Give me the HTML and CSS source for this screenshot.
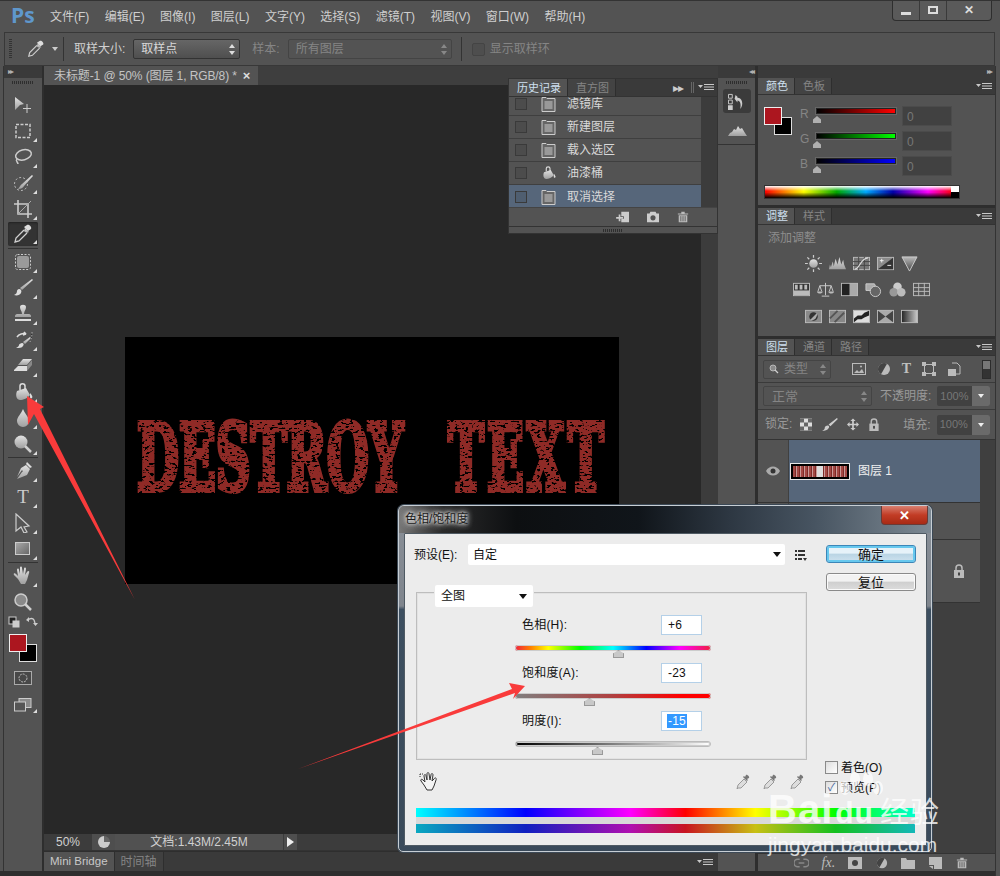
FILE: index.html
```html
<!DOCTYPE html>
<html lang="zh">
<head>
<meta charset="utf-8">
<title>Photoshop 色相/饱和度</title>
<link rel="stylesheet" href="styles.css">
</head>
<body>
<svg class="sprite" aria-hidden="true">
  <defs>
    <linearGradient id="g" x1="0" y1="0" x2="0" y2="1"><stop offset="0" stop-color="#e2e2e2"/><stop offset="1" stop-color="#a0a0a0"/></linearGradient>
    <filter id="distress" x="0" y="0" width="100%" height="100%">
      <feTurbulence type="fractalNoise" baseFrequency="0.11 0.45" numOctaves="3" seed="7" result="n"/>
      <feColorMatrix in="n" type="matrix" values="0 0 0 0 0  0 0 0 0 0  0 0 0 0 0  0 0 0 -14 9.2" result="m"/>
      <feComposite in="SourceGraphic" in2="m" operator="in"/>
    </filter>
  </defs>
  <symbol id="move" viewBox="0 0 20 20"><path fill="url(#g)" d="M2 2l9 7-4 1-5 5z"/><path fill="none" stroke="#ccc" d="M14 9v9M10 13.500h8"/></symbol>
  <symbol id="marquee" viewBox="0 0 20 20"><rect x="3" y="3.500" width="14" height="13" fill="none" stroke="#ccc" stroke-width="1.500" stroke-dasharray="3 1.500"/></symbol>
  <symbol id="lasso" viewBox="0 0 20 20"><ellipse cx="10.500" cy="8" rx="8" ry="5" fill="none" stroke="#ccc" stroke-width="1.500" transform="rotate(-15 10 8)"/><path fill="none" stroke="#ccc" stroke-width="1.500" d="M4 12c-2 2 1 3 1 5"/></symbol>
  <symbol id="quick" viewBox="0 0 20 20"><circle cx="8" cy="11" r="6.500" fill="none" stroke="#bbb" stroke-dasharray="2 2"/><path fill="url(#g)" d="M19 2l1 1-9 10c-1 2-3 3-6 3 2-2 2-4 4-5z"/></symbol>
  <symbol id="crop" viewBox="0 0 20 20"><path fill="none" stroke="#ccc" stroke-width="1.600" d="M5 1v14h14M1 5h14v14"/><path stroke="#aaa" d="M5 15L18 2"/></symbol>
  <symbol id="drop" viewBox="0 0 20 20"><path fill="url(#g)" d="M12 4l4 4-2 1-2-1-1-1z"/><path fill="#ddd" d="M14 1c2-1 5 2 4 4l-3 2-4-4z"/><path fill="none" stroke="#d0d0d0" stroke-width="1.300" d="M11 6L3 14l-1 4 4-1 8-8"/></symbol>
  <symbol id="heal" viewBox="0 0 20 20"><rect x="4" y="4" width="12" height="12" rx="2" fill="#9a9a9a"/><rect x="2.500" y="2.500" width="15" height="15" rx="2" fill="none" stroke="#ccc" stroke-dasharray="2 1.500"/></symbol>
  <symbol id="brush" viewBox="0 0 20 20"><path fill="url(#g)" d="M19 1l1 1L9 12l-2-2z"/><path fill="#ddd" d="M6 11c2 0 3 2 2 4-1 2-4 3-7 2 2-1 3-2 3-4 0-1 1-2 2-2z"/></symbol>
  <symbol id="stamp" viewBox="0 0 20 20"><path fill="url(#g)" d="M7 3c0-3 6-3 6 0 0 3-2 4-2 7h5c1 0 2 1 2 2v1H2v-1c0-1 1-2 2-2h5c0-3-2-4-2-7z"/><path fill="#ddd" d="M2 15h16v2H2z"/></symbol>
  <symbol id="hbrush" viewBox="0 0 20 20"><path fill="url(#g)" d="M17 7l1 1-6 6-2-2z"/><path fill="#ddd" d="M9 13c2 0 2 2 1 3-1 2-4 2-7 2 2-1 3-2 3-3 0-1 2-2 3-2z"/><path fill="none" stroke="#ddd" stroke-width="1.500" d="M4 7c2-3 6-4 9-3l-2-2M13 4l-3 1"/><path stroke="#aaa" stroke-dasharray="1.500 1.500" d="M19 2c0 5-1 7-2 10"/></symbol>
  <symbol id="eraser" viewBox="0 0 20 20"><path fill="url(#g)" d="M10 3h9l-5 6H5z"/><path fill="#ddd" d="M5 10h9v5H1v-1z"/><path fill="#888" d="M14 10l5-6v5l-5 6z"/></symbol>
  <symbol id="bucket" viewBox="0 0 20 20"><path fill="none" stroke="#ddd" stroke-width="1.500" d="M7 8V4c0-3 5-3 5 0v4"/><path fill="url(#g)" d="M4 9l9-3 4 7c-2 3-7 5-10 5C4 18 2 14 4 9z"/><path fill="#ddd" d="M17 11c2 2 3 4 2 5-1 1-2 0-2-1z"/></symbol>
  <symbol id="blur" viewBox="0 0 20 20"><path fill="url(#g)" d="M10 1c2 5 6 8 6 12a6 6 0 0 1-12 0c0-4 4-7 6-12z"/></symbol>
  <symbol id="dodge" viewBox="0 0 20 20"><circle cx="8" cy="8" r="6.500" fill="url(#g)"/><path stroke="#d0d0d0" stroke-width="2.500" d="M12 12l6 6"/></symbol>
  <symbol id="pen" viewBox="0 0 20 20"><path fill="url(#g)" d="M13 4l4 4-3 6-10 4 5-7c1 0 1-1 0-2L4 16l4-9z"/><path fill="#ddd" d="M14 1l5 5-2 1-4-4z"/></symbol>
  <symbol id="pointer" viewBox="0 0 20 20"><path fill="#555" stroke="#ccc" stroke-width="1.200" d="M3 1l13 12-5 1 3 5-3 1-3-6-5 4z"/></symbol>
  <symbol id="shape" viewBox="0 0 20 20"><defs><linearGradient id="s" x1="0" y1="0" x2="1" y2="1"><stop offset="0" stop-color="#aaa"/><stop offset="1" stop-color="#666"/></linearGradient></defs><rect x="2.500" y="3.500" width="14" height="12" fill="url(#s)" stroke="#ccc"/></symbol>
  <symbol id="hand" viewBox="0 0 20 20"><path fill="url(#g)" d="M5 13L1 9c-1-2 1-2 2-1l2 2-1-6c0-2 2-2 2 0l1 4V2c0-2 2-2 2 0l1 6 1-5c0-2 2-2 2 0l-1 6 2-3c1-2 3-1 2 1l-2 7-2 4H8z"/></symbol>
  <symbol id="zoom" viewBox="0 0 20 20"><circle cx="8" cy="8" r="6" fill="#8a8a8a" stroke="#ccc" stroke-width="1.500"/><path stroke="#d0d0d0" stroke-width="2.500" d="M12 12l6 6"/></symbol>
  <symbol id="defcol" viewBox="0 0 12 12"><rect x="1" y="1" width="7" height="7" fill="#222" stroke="#ccc"/><rect x="5" y="5" width="6" height="6" fill="#ccc" stroke="#ccc"/></symbol>
  <symbol id="swap" viewBox="0 0 12 12"><path fill="none" stroke="#ccc" stroke-width="1.300" d="M2 4c2-2 5-2 6 0l1 3"/><path fill="#ccc" d="M0 4l3-3v5zM7 7h5l-2.500 3z"/></symbol>
  <symbol id="qmask" viewBox="0 0 18 14"><rect x=".5" y=".5" width="17" height="13" fill="#484848" stroke="#aaa"/><circle cx="9" cy="7" r="4" fill="none" stroke="#bbb" stroke-dasharray="2 1"/></symbol>
  <symbol id="screen" viewBox="0 0 18 14"><rect x="5" y=".5" width="12" height="9" fill="#8a8a8a" stroke="#ccc"/><rect x=".5" y="4" width="11" height="9" fill="#555" stroke="#ccc"/></symbol>
  <symbol id="updn" viewBox="0 0 6 11"><path fill="currentColor" d="M3 0l3 4H0zM0 7h6l-3 4z"/></symbol>
  <symbol id="menu" viewBox="0 0 16 8"><path fill="#c8c8c8" d="M6 1h10v1H6zM6 3.500h10v1H6zM6 6h10v1H6zM0 2h5L2.500 5z"/></symbol>
  <symbol id="doc" viewBox="0 0 14 16"><path fill="#666" stroke="#ccc" d="M.5 1.500h4l1 1h8v13H.5z"/><path stroke="#ccc" d="M3 6h8M3 8h8M3 10h8M3 12h8"/></symbol>
  <symbol id="newsnap" viewBox="0 0 16 14"><path fill="#ccc" d="M6 1h9v12H6V9h3V6H6z"/><path fill="#ccc" d="M0 7h3V4h2v3h3v2H5v3H3V9H0z"/></symbol>
  <symbol id="camera" viewBox="0 0 16 14"><path fill="#ccc" d="M1 3h3l1-2h6l1 2h3v10H1z"/><circle cx="8" cy="8" r="3" fill="#535353"/></symbol>
  <symbol id="trash" viewBox="0 0 14 14"><path fill="#bbb" d="M1 3h12v1H1zM5 1h4v2H5zM2 5h10v8H2z"/><path stroke="#535353" d="M4.500 6v6M7 6v6M9.500 6v6"/></symbol>
  <symbol id="histo" viewBox="0 0 20 12"><path fill="url(#g)" d="M1 11l2-3 2-1 2-3 2 1 2-4 2 3 2-1 3 5 2 3z"/></symbol>
  <symbol id="histpanel" viewBox="0 0 18 18"><path fill="none" stroke="#ccc" d="M.5 1.500h4v4h-4zM.5 7.500h4v4h-4z"/><path fill="#ccc" d="M0 13h5v5H0zM8 2l2 2V5c5 0 7 7 3 12 1-5 0-9-3-9v2L7 6z"/></symbol>
  <symbol id="sun" viewBox="0 0 18 18"><circle cx="9" cy="9" r="4.500" fill="url(#g)"/><path stroke="#ccc" stroke-width="1.300" d="M9 0v3M9 15v3M0 9h3M15 9h3M2.500 2.500l2 2M13.500 13.500l2 2M2.500 15.500l2-2M13.500 4.500l2-2"/></symbol>
  <symbol id="levels" viewBox="0 0 18 18"><path fill="url(#g)" d="M0 15l1-5 1 3 2-6 1 5 2-8 2 6 2-8 2 8 2-5 1 5 2 5z"/></symbol>
  <symbol id="curves" viewBox="0 0 18 18"><rect x=".5" y="2.500" width="17" height="13" fill="#777" stroke="#bbb"/><path stroke="#444" d="M0 7h18M0 11h18M6 2v14M12 2v14"/><path fill="none" stroke="#ddd" stroke-width="1.300" d="M2 15c5 0 6-12 14-12"/></symbol>
  <symbol id="expo" viewBox="0 0 18 18"><rect x=".5" y="2.500" width="17" height="13" fill="#8a8a8a" stroke="#bbb"/><path fill="#333" d="M17 3v12H1z"/><path stroke="#eee" d="M3 6h4M5 4v4M11 11h4"/></symbol>
  <symbol id="vib" viewBox="0 0 18 18"><defs><linearGradient id="v" x1="0" y1="0" x2="0" y2="1"><stop offset="0" stop-color="#bbb"/><stop offset="1" stop-color="#444"/></linearGradient></defs><path fill="url(#v)" stroke="#ccc" d="M1 2h16L9 17z"/></symbol>
  <symbol id="hsl" viewBox="0 0 18 18"><rect x=".5" y="2.500" width="17" height="13" fill="#333" stroke="#bbb"/><path fill="#bbb" d="M2 4h3v5H2zM7 4h3v5H7zM12 4h3v5h-3z"/><rect x="1" y="10" width="16" height="5" fill="#bbb"/></symbol>
  <symbol id="balance" viewBox="0 0 18 18"><path fill="none" stroke="#ccc" d="M3 5h12M9 2v13M5 16h8M3 5L1 11M3 5l2 6M15 5l-2 6M15 5l2 6"/><path fill="#bbb" d="M0 11h6c0 3-6 3-6 0zM12 11h6c0 3-6 3-6 0z"/></symbol>
  <symbol id="bw" viewBox="0 0 18 18"><rect x=".5" y="2.500" width="17" height="13" fill="#aaa" stroke="#bbb"/><rect x="1" y="3" width="8" height="12" fill="#222"/></symbol>
  <symbol id="photo" viewBox="0 0 18 18"><path fill="#aaa" stroke="#ccc" d="M1 3h9l1 2v5H1z"/><circle cx="11" cy="11" r="5.500" fill="#666" stroke="#ccc"/></symbol>
  <symbol id="mixer" viewBox="0 0 18 18"><circle cx="9" cy="6" r="4.500" fill="#ccc"/><circle cx="5" cy="12" r="4.500" fill="#999"/><circle cx="13" cy="12" r="4.500" fill="#bbb"/></symbol>
  <symbol id="lookup" viewBox="0 0 18 18"><rect x=".5" y="2.500" width="17" height="13" fill="#555" stroke="#bbb"/><path stroke="#bbb" d="M6 2v14M12 2v14M0 7h18M0 11h18"/></symbol>
  <symbol id="invert" viewBox="0 0 18 18"><rect x=".5" y="2.500" width="17" height="13" fill="#8a8a8a" stroke="#bbb"/><circle cx="9" cy="9" r="4.500" fill="#333"/><path fill="#aaa" d="M13 5L5 13c5 1 8-3 8-8z"/></symbol>
  <symbol id="poster" viewBox="0 0 18 18"><rect x=".5" y="2.500" width="17" height="13" fill="#888" stroke="#bbb"/><path stroke="#555" stroke-width="2" d="M1 11l8-8M6 15l10-10"/></symbol>
  <symbol id="thresh" viewBox="0 0 18 18"><rect x=".5" y="2.500" width="17" height="13" fill="#ddd" stroke="#bbb"/><path fill="#222" d="M1 11l4-3h4l3-3 5-2v5l-5 2-3 2H5l-4 3z"/></symbol>
  <symbol id="selcol" viewBox="0 0 18 18"><rect x=".5" y="2.500" width="17" height="13" fill="#aaa" stroke="#bbb"/><path fill="#444" d="M1 3l8 6-8 6zM17 3L9 9l8 6z"/></symbol>
  <symbol id="gmap" viewBox="0 0 18 18"><defs><linearGradient id="m"><stop offset="0" stop-color="#222"/><stop offset="1" stop-color="#ccc"/></linearGradient></defs><rect x=".5" y="2.500" width="17" height="13" fill="url(#m)" stroke="#bbb"/></symbol>
  <symbol id="fimg" viewBox="0 0 14 14"><rect x=".5" y="1.500" width="13" height="11" fill="#555" stroke="#bbb"/><path fill="#bbb" d="M2 11l3-3 2 2 3-3 2 4z"/><circle cx="9" cy="4.500" r="1" fill="#bbb"/></symbol>
  <symbol id="fadj" viewBox="0 0 14 14"><circle cx="7" cy="7" r="6" fill="#bbb"/><path fill="#444" d="M7 1a6 6 0 0 0 0 12z" transform="rotate(30 7 7)"/></symbol>
  <symbol id="fshape" viewBox="0 0 14 14"><path fill="none" stroke="#bbb" d="M2.500 2.500h9v9h-9z"/><path fill="#bbb" d="M0 0h4v4H0zM10 0h4v4h-4zM0 10h4v4H0zM10 10h4v4h-4z"/></symbol>
  <symbol id="fsmart" viewBox="0 0 14 14"><path fill="none" stroke="#bbb" d="M5 1h5l3 3v8H9"/><rect x="1" y="7" width="8" height="7" fill="#bbb"/></symbol>
  <symbol id="lockpx" viewBox="0 0 12 12"><path fill="#ddd" d="M0 0h12v12H0z"/><path fill="#666" d="M0 0h4v4H0zM8 0h4v4H8zM4 4h4v4H4zM0 8h4v4H0zM8 8h4v4H8z"/></symbol>
  <symbol id="lockbr" viewBox="0 0 18 14"><path fill="#ccc" d="M17 0l1 1-8 8-2-2zM7 8c2 0 2 2 1 3-1 2-4 3-7 3 2-1 3-2 3-4 0-1 2-2 3-2z"/></symbol>
  <symbol id="lockmv" viewBox="0 0 14 14"><path fill="#ccc" d="M7 0l3 3H8v3h3V4l3 3-3 3V8H8v3h2l-3 3-3-3h2V8H3v2L0 7l3-3v2h3V3H4z"/></symbol>
  <symbol id="lock" viewBox="0 0 12 14"><path fill="none" stroke="#bbb" stroke-width="1.500" d="M3 7V4c0-4 6-4 6 0v3"/><path fill="#bbb" d="M1 6h10v8H1z"/><rect x="5" y="8.500" width="2" height="3" fill="#444"/></symbol>
  <symbol id="eye" viewBox="0 0 14 10"><path fill="#aaa" d="M0 5c3-6 11-6 14 0-3 6-11 6-14 0z"/><circle cx="7" cy="5" r="2.500" fill="#333"/></symbol>
  <symbol id="link" viewBox="0 0 16 10"><path fill="none" stroke="#888" stroke-width="1.500" d="M6 1H4a4 4 0 0 0 0 8h2M10 1h2a4 4 0 0 1 0 8h-2M5 5h6"/></symbol>
  <symbol id="mask" viewBox="0 0 14 12"><rect width="14" height="12" fill="#bbb"/><circle cx="7" cy="6" r="3" fill="#444"/></symbol>
  <symbol id="folder" viewBox="0 0 14 12"><path fill="#bbb" d="M0 1h5l1 2h8v9H0z"/></symbol>
  <symbol id="newl" viewBox="0 0 14 12"><path fill="#bbb" d="M1 0h13v12H6V8H1z"/><path fill="#bbb" d="M1 9h4v3z"/></symbol>
  <symbol id="dlgdrop" viewBox="0 0 16 16"><path fill="#ddd" stroke="#999" d="M2 14l-1 1 1-4 6-6 3 3-6 6z"/><path fill="#777" d="M9 3l1-2c1-1 4 2 3 3l-2 1 1 1-1 1-4-4 1-1z"/></symbol>
  <symbol id="dhand" viewBox="0 0 20 20"><path fill="#f4f4f4" stroke="#333" d="M5 13L2 9c-1-2 1-2 2-1l2 2-1-6c0-2 2-2 2 0l1 4V2c0-2 2-2 2 0l1 6 1-5c0-2 2-2 2 0l-1 6 2-2c1-2 3-1 2 1l-2 6-2 4H8z"/><path stroke="#333" stroke-dasharray="1 1" d="M1 2h3M1 2v3"/></symbol>
  <symbol id="dlist" viewBox="0 0 12 12"><path fill="#333" d="M0 1h2v2H0zM3 1h7v2H3zM0 5h2v2H0zM3 5h7v2H3zM0 9h2v2H0zM3 9h4v2H3zM8 9h4l-2 3z"/></symbol>
  <symbol id="paw" viewBox="0 0 44 30"><ellipse cx="6" cy="16" rx="5" ry="7"/><ellipse cx="16" cy="7" rx="5" ry="7"/><ellipse cx="29" cy="7" rx="5" ry="7"/><ellipse cx="39" cy="16" rx="5" ry="7"/></symbol>
</svg>

<div class="app">
  <header class="titlebar">
    <div class="logo">Ps</div>
    <nav class="menu">
      <span>文件(F)</span><span>编辑(E)</span><span>图像(I)</span><span>图层(L)</span><span>文字(Y)</span><span>选择(S)</span><span>滤镜(T)</span><span>视图(V)</span><span>窗口(W)</span><span>帮助(H)</span>
    </nav>
    <div class="winbtns">
      <div class="winbtn wmin"><i class="w-min"></i></div>
      <div class="winbtn wmax"><i class="w-max"></i></div>
      <div class="winbtn wclose">✕</div>
    </div>
  </header>

  <div class="options">
    <div class="grip-v"></div>
    <svg class="opt-tool"><use href="#drop"/></svg>
    <i class="caret"></i>
    <i class="opt-sep"></i>
    <span class="opt-label">取样大小:</span>
    <div class="sel sel-size"><span>取样点</span><svg class="updn"><use href="#updn"/></svg></div>
    <span class="opt-label gap dim">样本:</span>
    <div class="sel sel-sample dim"><span>所有图层</span><svg class="updn"><use href="#updn"/></svg></div>
    <i class="opt-sep sep2"></i>
    <i class="opt-check"></i>
    <span class="opt-label dim">显示取样环</span>
  </div>

  <div class="main">
    <div class="edge-left"></div>

    <aside class="toolcol">
      <div class="collapse-bar">▸▸</div>
      <div class="toolbar">
        <div class="grip-h"></div>
        <div class="tool"><svg><use href="#move"/></svg></div>
        <div class="tool more"><svg><use href="#marquee"/></svg></div>
        <div class="tool more"><svg><use href="#lasso"/></svg></div>
        <div class="tool more"><svg><use href="#quick"/></svg></div>
        <div class="tool more"><svg><use href="#crop"/></svg></div>
        <div class="tool more active"><svg><use href="#drop"/></svg></div>
        <div class="tool-sep"></div>
        <div class="tool more"><svg><use href="#heal"/></svg></div>
        <div class="tool more"><svg><use href="#brush"/></svg></div>
        <div class="tool more"><svg><use href="#stamp"/></svg></div>
        <div class="tool more"><svg><use href="#hbrush"/></svg></div>
        <div class="tool more"><svg><use href="#eraser"/></svg></div>
        <div class="tool more"><svg><use href="#bucket"/></svg></div>
        <div class="tool more"><svg><use href="#blur"/></svg></div>
        <div class="tool more"><svg><use href="#dodge"/></svg></div>
        <div class="tool-sep"></div>
        <div class="tool more"><svg><use href="#pen"/></svg></div>
        <div class="tool more tool-t">T</div>
        <div class="tool more"><svg><use href="#pointer"/></svg></div>
        <div class="tool more"><svg><use href="#shape"/></svg></div>
        <div class="tool-sep"></div>
        <div class="tool more"><svg><use href="#hand"/></svg></div>
        <div class="tool"><svg><use href="#zoom"/></svg></div>
        <div class="swaprow"><svg><use href="#defcol"/></svg><svg><use href="#swap"/></svg></div>
        <div class="swatches"><i class="sw-bg"></i><i class="sw-fg"></i></div>
        <svg class="qmask"><use href="#qmask"/></svg>
        <div class="screenmode more"><svg><use href="#screen"/></svg></div>
      </div>
    </aside>

    <section class="doc">
      <div class="doctabs">
        <div class="doctab"><span>未标题-1 @ 50% (图层 1, RGB/8) *</span><b>×</b></div>
      </div>
      <div class="docbody">
        <div class="canvas-wrap">
          <div class="canvas"><div class="dtext">DESTROY <span class="dword2">TEXT</span></div></div>
        </div>
        <div class="docstrip"></div>
      </div>
      <div class="status">
        <span class="st-zoom">50%</span>
        <span class="st-icon"><i></i></span>
        <span class="st-doc">文档:1.43M/2.45M</span>
        <span class="st-arrow"><i></i></span>
      </div>
      <div class="bottomtabs">
        <span class="btab on">Mini Bridge</span>
        <span class="btab">时间轴</span>
        <svg class="menuicon"><use href="#menu"/></svg>
      </div>
    </section>

    <aside class="dockcol">
      <div class="collapse-bar center">◂◂</div>
      <div class="dock">
        <div class="grip-h"></div>
        <div class="dockbtn"><svg><use href="#histpanel"/></svg></div>
        <svg class="dockhist"><use href="#histo"/></svg>
      </div>
      <div class="dockrest"></div>
    </aside>

    <aside class="panels">
      <div class="collapse-bar right">▸▸</div>

      <div class="panel p-color">
        <div class="tabs"><span class="tab on">颜色</span><span class="tab">色板</span><svg class="menuicon"><use href="#menu"/></svg></div>
        <div class="color-body">
          <div class="colorrow">
            <div class="swatches big"><i class="sw-bg"></i><i class="sw-fg"></i></div>
            <div class="csliders">
              <div class="cs"><span>R</span><div class="ctrack tr"><i></i></div><div class="cval">0</div></div>
              <div class="cs"><span>G</span><div class="ctrack tg"><i></i></div><div class="cval">0</div></div>
              <div class="cs"><span>B</span><div class="ctrack tb"><i></i></div><div class="cval">0</div></div>
            </div>
          </div>
          <div class="ramp"><i></i></div>
        </div>
      </div>

      <div class="panel p-adjust">
        <div class="tabs"><span class="tab on">调整</span><span class="tab">样式</span><svg class="menuicon"><use href="#menu"/></svg></div>
        <div class="adj-title">添加调整</div>
        <div class="adj-row"><svg><use href="#sun"/></svg><svg><use href="#levels"/></svg><svg><use href="#curves"/></svg><svg><use href="#expo"/></svg><svg><use href="#vib"/></svg></div>
        <div class="adj-row"><svg><use href="#hsl"/></svg><svg><use href="#balance"/></svg><svg><use href="#bw"/></svg><svg><use href="#photo"/></svg><svg><use href="#mixer"/></svg><svg><use href="#lookup"/></svg></div>
        <div class="adj-row"><svg><use href="#invert"/></svg><svg><use href="#poster"/></svg><svg><use href="#thresh"/></svg><svg><use href="#selcol"/></svg><svg><use href="#gmap"/></svg></div>
      </div>

      <div class="panel p-layers">
        <div class="tabs"><span class="tab on">图层</span><span class="tab">通道</span><span class="tab">路径</span><svg class="menuicon"><use href="#menu"/></svg></div>
        <div class="lrow lfilter">
          <div class="sel sel-filter dim"><svg class="mag"><use href="#zoom"/></svg><span>类型</span><svg class="updn"><use href="#updn"/></svg></div>
          <div class="ficons"><svg><use href="#fimg"/></svg><svg><use href="#fadj"/></svg><span class="ft">T</span><svg><use href="#fshape"/></svg><svg><use href="#fsmart"/></svg></div>
          <div class="ftoggle"><i></i></div>
        </div>
        <div class="lrow lblend">
          <div class="sel sel-blend dim"><span>正常</span><svg class="updn"><use href="#updn"/></svg></div>
          <span class="llabel">不透明度:</span>
          <div class="lnum"><span>100%</span><b><i class="caret"></i></b></div>
        </div>
        <div class="lrow llock">
          <span class="llabel">锁定:</span>
          <div class="licons"><svg><use href="#lockpx"/></svg><svg class="wide"><use href="#lockbr"/></svg><svg><use href="#lockmv"/></svg><svg><use href="#lock"/></svg></div>
          <span class="llabel fill">填充:</span>
          <div class="lnum"><span>100%</span><b><i class="caret"></i></b></div>
        </div>
        <div class="layers">
          <div class="layer sel-layer">
            <div class="eyecol"><svg><use href="#eye"/></svg></div>
            <div class="lbody"><div class="thumb"><i></i></div><span class="lname">图层 1</span></div>
          </div>
          <div class="layer short"><div class="eyecol"></div><div class="lbody"></div></div>
          <div class="layer bg"><div class="eyecol"></div><div class="lbody"><svg class="llock-ic"><use href="#lock"/></svg></div></div>
        </div>
        <div class="lfoot">
          <svg class="lnk"><use href="#link"/></svg>
          <span class="fx">fx.</span>
          <svg><use href="#mask"/></svg>
          <svg><use href="#fadj"/></svg>
          <svg><use href="#folder"/></svg>
          <svg><use href="#newl"/></svg>
          <svg><use href="#trash"/></svg>
        </div>
      </div>
    </aside>
    <div class="edge-right"></div>
  </div>

  <!-- floating history panel -->
  <div class="history">
    <div class="tabs"><span class="tab on wide">历史记录</span><span class="tab">直方图</span><span class="hist-ff">▸▸</span><i class="hist-bar"></i><svg class="menuicon"><use href="#menu"/></svg></div>
    <div class="hist-main">
      <div class="hist-list">
        <div class="hrow cut"><i class="hbox"></i><svg><use href="#doc"/></svg><span>滤镜库</span></div>
        <div class="hrow"><i class="hbox"></i><svg><use href="#doc"/></svg><span>新建图层</span></div>
        <div class="hrow"><i class="hbox"></i><svg><use href="#doc"/></svg><span>载入选区</span></div>
        <div class="hrow"><i class="hbox"></i><svg><use href="#bucket"/></svg><span>油漆桶</span></div>
        <div class="hrow on"><i class="hbox"></i><svg><use href="#doc"/></svg><span>取消选择</span></div>
      </div>
      <div class="hist-scroll"></div>
    </div>
    <div class="hist-foot"><svg class="nsnap"><use href="#newsnap"/></svg><svg><use href="#camera"/></svg><svg><use href="#trash"/></svg></div>
    <div class="hist-grip"><i></i></div>
  </div>

  <!-- modal dialog -->
  <div class="dialog">
    <div class="dlg-title"><span>色相/饱和度</span><div class="dlg-close">✕</div></div>
    <div class="dlg-body">
      <div class="dlg-main">
        <div class="dlg-left">
          <div class="preset">
            <span class="plabel">预设(E):</span>
            <div class="wsel"><span>自定</span><i class="tri"></i></div>
            <svg class="dlist"><use href="#dlist"/></svg>
          </div>
          <div class="group">
            <div class="legend"><span>全图</span><i class="tri"></i></div>
            <div class="hs">
              <div class="hs-row"><span>色相(H):</span><div class="num">+6</div></div>
              <div class="track t-hue"><i style="left:98px"></i></div>
              <div class="hs-row"><span>饱和度(A):</span><div class="num">-23</div></div>
              <div class="track t-sat"><i style="left:69px"></i></div>
              <div class="hs-row"><span>明度(I):</span><div class="num"><em>-15</em></div></div>
              <div class="track t-lum"><i style="left:76px"></i></div>
            </div>
          </div>
          <div class="pickers">
            <svg class="dhand"><use href="#dhand"/></svg>
            <div class="drops"><svg><use href="#dlgdrop"/></svg><svg><use href="#dlgdrop"/></svg><svg><use href="#dlgdrop"/></svg></div>
          </div>
        </div>
        <div class="dlg-right">
          <div class="wbtn primary">确定</div>
          <div class="wbtn">复位</div>
          <label class="wcheck first"><i></i>着色(O)</label>
          <label class="wcheck"><i class="checked">✓</i>预览(P)</label>
        </div>
      </div>
      <div class="spectra"><i class="sp1"></i><i class="sp2"></i></div>
    </div>
  </div>

  <!-- annotations burned into the screenshot -->
  <svg class="arrows" viewBox="0 0 1000 876">
    <polygon points="27,396 44,407 40,409 135,600 34,414 28,425"/>
    <polygon points="525,686 509,683 512,689 298,769 515,693 513,699"/>
  </svg>
  <div class="watermark">
    <svg class="wpaw"><use href="#paw"/></svg>
    <div class="wm1"><span>Bai</span><span class="wdu">du</span><span class="wcn">经验</span></div>
    <div class="wm2">jingyan.baidu.com</div>
  </div>
</div>
</body>
</html>
```

FILE: styles.css
```css
* { box-sizing: border-box; }
html, body { margin: 0; padding: 0; }
body { width: 1000px; height: 876px; overflow: hidden; background: #535353; }
i { display: block; font-style: normal; }
.sprite { position: absolute; width: 0; height: 0; }
.app {
  position: relative; width: 1000px; height: 876px; overflow: hidden;
  display: flex; flex-direction: column;
  background: #535353; color: #c8c8c8;
  font: 12px/1 "Liberation Sans", "Noto Sans CJK SC", sans-serif;
}

/* title bar */
.titlebar { height: 32px; display: flex; align-items: center; border-top: 1px solid #333; flex: none; }
.logo { width: 50px; padding-left: 11px; font: bold 21px/1 "Open Sans", sans-serif; color: #5f97cc; margin-top: -2px; }
.menu { display: flex; gap: 15.4px; margin-top: 1px; color: #cfcfcf; }
.winbtns {
  margin-left: auto; margin-right: 8px; margin-top: -12px; display: flex; height: 20px; width: 100px;
  border: 1px solid #2e2e2e; border-top: 0; border-radius: 0 0 4px 4px; background: #5a5a5a;
}
.winbtn { display: flex; align-items: center; justify-content: center; color: #ddd; border-right: 1px solid #3a3a3a; }
.wmin { width: 27px; } .wmax { width: 27px; } .wclose { flex: 1; border: 0; font-size: 12px; font-weight: bold; }
.w-min { width: 10px; height: 3px; background: #ddd; margin-top: 6px; }
.w-max { width: 10px; height: 8px; border: 2px solid #ddd; }

/* options */
.options {
  height: 34px; flex: none; margin: 0 5px 0 4px; display: flex; align-items: center;
  border: 1px solid #383838; background: #535353;
}
.grip-v { width: 3px; height: 20px; margin-left: 4px; background: repeating-linear-gradient(180deg, #333 0 1px, transparent 1px 2px); }
.opt-tool { width: 18px; height: 18px; margin-left: 15px; }
.caret { width: 0; height: 0; border: 3.500px solid transparent; border-top: 4px solid #ccc; border-bottom: 0; }
.options .caret { margin-left: 7px; }
.opt-sep { width: 1px; height: 24px; background: #333; margin-left: 5px; }
.sep2 { margin-left: 9px; }
.opt-label { margin-left: 10px; white-space: nowrap; color: #d0d0d0; }
.opt-label.dim { color: #858585; }
.opt-label.gap { margin-left: 12px; }
.sel {
  display: flex; align-items: center; border: 1px solid #333; border-radius: 2px;
  background: linear-gradient(#666, #4f4f4f); color: #d8d8d8; padding-left: 7px;
}
.sel.dim { background: #535353; border-color: #444; color: #858585; }
.updn { width: 6px; height: 11px; margin-left: auto; margin-right: 4px; color: #ddd; }
.dim .updn { color: #888; }
.sel-size { width: 107px; height: 20px; margin-left: 8px; }
.sel-sample { width: 164px; height: 20px; margin-left: 8px; }
.opt-check { width: 13px; height: 13px; border: 1px solid #444; border-radius: 2px; background: #4e4e4e; margin-left: 10px; }
.options .opt-check + .opt-label { margin-left: 5px; }

/* main */
.main { flex: 1; display: flex; min-height: 0; height: 810px; background: #2e2e2e; }
.edge-left { width: 4px; background: #535353; border-right: 1px solid #333; flex: none; height: 805px; }
.edge-right { flex: 1; background: #535353; border-left: 1px solid #333; }
.collapse-bar {
  height: 12px; flex: none; background: #3a3a3a; color: #b0b0b0; font-size: 8px; line-height: 12px; padding-left: 4px; letter-spacing: -2px;
}
.collapse-bar.center { text-align: right; padding-right: 2px; }
.collapse-bar.right { text-align: right; padding-right: 4px; }

/* tools */
.toolcol { width: 38px; flex: none; margin-right: 2px; display: flex; flex-direction: column; height: 805px; }
.toolbar { flex: 1; background: #535353; padding-top: 3px; display: flex; flex-direction: column; align-items: center; position: relative; }
.grip-h { width: 22px; height: 3px; flex: none; background: repeating-linear-gradient(90deg, #2e2e2e 0 1px, transparent 1px 2px); margin-bottom: 8px; }
.tool { position: relative; width: 30px; height: 26px; flex: none; display: flex; align-items: center; justify-content: center; color: #d0d0d0; }
.tool svg { width: 20px; height: 20px; }
.tool.active { background: #333; border-radius: 2px; height: 24px; margin-bottom: 2px; box-shadow: inset 0 1px 2px #222; }
.more::after {
  content: ""; position: absolute; right: 1px; bottom: 2px; width: 0; height: 0;
  border: 2px solid transparent; border-right-color: #ddd; border-bottom-color: #ddd;
}
.tool-t { font: 19px "Liberation Serif", serif; color: #ccc; }
.tool-sep { width: 30px; height: 1px; flex: none; background: #333; }
.swaprow { width: 30px; height: 14px; margin-top: 1px; display: flex; justify-content: space-between; flex: none; }
.swaprow svg { width: 12px; height: 12px; }
.swatches { position: relative; width: 28px; height: 28px; margin-top: 4px; flex: none; }
.sw-fg { position: absolute; left: 0; top: 0; width: 18px; height: 18px; background: #ac161f; border: 1px solid #eee; }
.sw-bg { position: absolute; left: 10px; top: 10px; width: 18px; height: 18px; background: #000; border: 1px solid #ddd; }
.qmask { width: 18px; height: 14px; margin-top: 9px; flex: none; }
.screenmode { position: relative; width: 30px; height: 20px; margin-top: 10px; display: flex; justify-content: center; align-items: center; flex: none; }
.screenmode svg { width: 18px; height: 14px; }

/* document */
.doc { width: 674px; flex: none; display: flex; flex-direction: column; height: 805px; }
.doctabs { height: 19px; flex: none; background: #3e3e3e; }
.doctab { width: 214px; height: 19px; background: #535353; display: flex; align-items: center; padding-left: 10px; color: #c4c4c4; }
.doctab span { white-space: nowrap; letter-spacing: -.1px; }
.doctab b { margin-left: 6px; font-size: 13px; color: #ddd; }
.docbody { flex: 1; display: flex; min-height: 0; }
.canvas-wrap { width: 657px; padding: 2px 2px 0 0; background: #282828; display: flex; align-items: center; justify-content: center; }
.docstrip { flex: 1; background: #3c3c3c; }
.canvas { width: 494px; height: 247px; background: #000; position: relative; overflow: hidden; }
.dtext {
  position: absolute; left: 10px; top: 75px; white-space: nowrap; transform-origin: 0 0; transform: scaleX(.525);
  font: bold 92px/92px "DejaVu Serif", serif; word-spacing: 53px; padding: 0 4px; color: #8f2c27;
  -webkit-text-stroke: 6px #8f2c27; filter: url(#distress);
}
.dword2 { letter-spacing: 6px; }
.status { height: 17px; flex: none; display: flex; background: #3c3c3c; color: #d0d0d0; align-items: stretch; border-bottom: 1px solid #333; }
.status span { display: flex; align-items: center; }
.st-zoom { width: 48px; padding-left: 12px; }
.st-icon { width: 23px; background: #4e4e4e; justify-content: center; }
.st-icon i { width: 12px; height: 12px; border-radius: 50%; background: conic-gradient(#666 0 25%, #ccc 25% 100%); }
.st-doc { width: 168px; background: #515151; justify-content: center; }
.st-arrow { width: 13px; background: #4e4e4e; justify-content: center; margin-left: 1px; }
.st-arrow i { border: 5px solid transparent; border-left: 7px solid #eee; border-right: 0; }
.bottomtabs { height: 19px; margin-top: 1px; flex: none; background: #3a3a3a; display: flex; position: relative; }
.btab { display: flex; align-items: center; padding: 0 6px; color: #858585; border-right: 1px solid #2e2e2e; background: #404040; }
.btab.on { background: #535353; color: #c8c8c8; font-size: 11.500px; }
.menuicon { width: 16px; height: 8px; flex: none; }
.bottomtabs .menuicon { margin: 6px 5px 0 auto; }

/* dock */
.dockcol { width: 37px; flex: none; margin-right: 3px; display: flex; flex-direction: column; height: 805px; }
.dock { height: 67px; background: #535353; display: flex; flex-direction: column; align-items: center; padding-top: 3px; border-bottom: 1px solid #333; flex: none; }
.dock .grip-h { margin-bottom: 5px; }
.dockbtn { width: 28px; height: 24px; background: #3b3b3b; border-radius: 3px; display: flex; align-items: center; justify-content: center; }
.dockbtn svg { width: 17px; height: 17px; }
.dockhist { width: 20px; height: 12px; margin-top: 12px; }
.dockrest { flex: 1; background: #535353; }

/* panels */
.panels { width: 237px; flex: none; display: flex; flex-direction: column; height: 805px; }
.panel { background: #535353; flex: none; }
.p-color { height: 127px; }
.p-adjust { height: 128px; margin-top: 3px; }
.p-layers { margin-top: 3px; flex: 1; display: flex; flex-direction: column; background: #3f3f3f; }
.tabs { height: 17px; display: flex; background: #3a3a3a; flex: none; align-items: stretch; border-bottom: 1px solid #333; }
.tab { display: flex; align-items: center; padding: 1px 6px 0 8px; background: #434343; color: #858585; border-right: 1px solid #2e2e2e; font-size: 11px; }
.tab.on { background: #535353; color: #cfe0f0; }
.tabs .menuicon { margin: 4px 3px 0 auto; }

.color-body { padding: 11px 0 0 6px; }
.colorrow { display: flex; }
.swatches.big { margin-top: 1px; }
.csliders { margin-left: 8px; }
.cs { display: flex; height: 25px; position: relative; }
.cs > span { width: 16px; padding-top: 1px; margin-top: 1px; color: #858585; font-size: 12px; }
.ctrack { position: relative; width: 80px; height: 6px; margin-top: 2px; border: 1px solid #222; box-shadow: 0 0 0 1px #666; }
.ctrack i { position: absolute; left: -4px; top: 7px; width: 8px; height: 7px; background: #b0b0b0; clip-path: polygon(50% 0, 100% 50%, 100% 100%, 0 100%, 0 50%); }
.tr { background: linear-gradient(90deg, #000, #f00); }
.tg { background: linear-gradient(90deg, #000, #0f0); }
.tb { background: linear-gradient(90deg, #000, #00f); }
.cval { width: 50px; height: 20px; margin-left: 6px; background: #414141; border: 1px solid #4b4b4b; color: #777; padding: 4px 4px; font-size: 12px; }
.ramp {
  width: 196px; height: 14px; margin-top: 4px; border: 1px solid #333; position: relative;
  background: linear-gradient(180deg, #fff, rgba(255,255,255,0) 42%, rgba(0,0,0,0) 52%, #000),
    linear-gradient(90deg, #f00, #ff0 20%, #0a0 37%, #0af 52%, #00a 66%, #f0f 84%, #f00 97%);
}
.ramp i { position: absolute; right: 0; top: 0; bottom: 0; width: 8px; background: linear-gradient(#fff 50%, #000 50%); }

.adj-title { padding: 7px 0 0 10px; height: 25px; color: #8d8d8d; font-size: 12px; }
.adj-row { display: flex; justify-content: center; gap: 7px; height: 26.500px; align-items: center; margin-left: -30px; }
.adj-row svg { width: 17px; height: 17px; }

.lrow { display: flex; align-items: center; background: #535353; border-bottom: 1px solid #3a3a3a; flex: none; padding-left: 5px; }
.lfilter { height: 27px; }
.sel-filter { width: 68px; height: 19px; padding-left: 5px; gap: 5px; }
.sel-filter .mag { width: 10px; height: 10px; flex: none; }
.ficons { display: flex; width: 109px; margin-left: 21px; justify-content: space-between; align-items: center; }
.ficons svg { width: 14px; height: 14px; }
.ft { font: bold 14px "Liberation Serif", serif; color: #c0c0c0; }
.ftoggle { width: 9px; height: 19px; margin-left: 21px; background: #333; border: 1px solid #2c2c2c; }
.ftoggle i { height: 8px; background: #777; }
.lblend { height: 27px; }
.sel-blend { width: 109px; height: 20px; padding-left: 8px; color: #999; font-size: 13px; }
.llabel { margin-left: 8px; color: #999; white-space: nowrap; }
.lnum { display: flex; height: 20px; width: 53px; margin-left: 6px; background: #414141; border-radius: 2px; color: #777; font-size: 11px; align-items: center; padding-left: 3px; }
.lnum b { margin-left: auto; width: 18px; height: 20px; background: #6a6a6a; border-radius: 0 2px 2px 0; display: flex; align-items: center; justify-content: center; }
.lnum .caret { border-top-color: #eee; }
.llock { height: 30px; border-bottom: 1px solid #333; }
.llock .llabel:first-child { margin-left: 2px; margin-top: -1px; }
.licons { display: flex; align-items: center; gap: 9px; margin-left: 8px; width: 82px; }
.licons svg { width: 12px; height: 13px; }
.licons svg.wide { width: 17px; }
.llabel.fill { margin-left: 21px; }
.layers { flex: 1; min-height: 0; width: 222px; }
.layer { display: flex; height: 63px; background: #535353; border-bottom: 1px solid #333; }
.layer.short { height: 37px; }
.eyecol { width: 31px; border-right: 1px solid #404040; display: flex; align-items: center; justify-content: center; }
.eyecol svg { width: 14px; height: 10px; }
.lbody { flex: 1; display: flex; align-items: center; padding-left: 1px; position: relative; }
.sel-layer .lbody { background: #56667a; }
.thumb { width: 60px; height: 17px; border: 1px solid #111; outline: 1px solid #e8e8e8; outline-offset: -1px; padding: 2px; background: #000; }
.thumb i { height: 100%; background:
  linear-gradient(90deg, transparent 0 44%, #ddd 44% 56%, transparent 56%),
  repeating-linear-gradient(90deg, #a34844 0 2px, #7c2a27 2px 3px, #c99a98 3px 4px); }
.lname { margin-left: 8px; color: #f0f0f0; }
.llock-ic { width: 12px; height: 14px; margin-left: 163px; }
.lfoot { height: 18px; flex: none; background: #535353; border-top: 1px solid #333; display: flex; align-items: center; padding-left: 36px; gap: 12.600px; }
.lfoot svg { width: 14px; height: 12px; }
.lfoot .lnk { width: 15px; height: 10px; }
.fx { font: italic 14px/14px "Liberation Serif", serif; color: #bbb; width: 14px; }

/* history */
.history { position: absolute; left: 509px; top: 79px; width: 208px; height: 154px; background: #535353; display: flex; flex-direction: column; box-shadow: 0 0 0 1px #333; }
.history .tabs { height: 18px; }
.hist-ff { margin: 3px 0 0 auto; font-size: 12px; letter-spacing: -1px; color: #ccc; }
.hist-bar { width: 3px; height: 11px; margin: 3px 4px 0 8px; border-left: 1px solid #666; border-right: 1px solid #666; }
.history .tabs .menuicon { margin-left: 0; }
.hist-main { display: flex; height: 110px; flex: none; }
.hist-list { width: 192px; overflow: hidden; }
.hist-scroll { flex: 1; background: #3c3c3c; }
.hrow { height: 23px; display: flex; align-items: center; border-bottom: 1px solid #3f3f3f; padding-left: 6px; background: #535353; color: #d8d8d8; }
.hrow.cut { margin-top: -4px; }
.hrow.on { background: #56667a; border-bottom: 0; }
.hbox { width: 12px; height: 12px; border: 1px solid #3a3a3a; background: rgba(0,0,0,.08); }
.hrow svg { width: 15px; height: 16px; margin: 0 11px 0 14px; }
.hist-foot { height: 19px; display: flex; align-items: center; padding-left: 107px; gap: 16px; border-top: 1px solid #444; flex: none; }
.hist-foot svg { width: 14px; height: 12px; }
.hist-grip { height: 7px; border-top: 1px solid #333; display: flex; justify-content: center; align-items: center; flex: none; }
.hist-grip i { width: 20px; height: 3px; background: repeating-linear-gradient(90deg, #2e2e2e 0 1px, transparent 1px 2px); }

/* dialog */
.dialog {
  position: absolute; left: 398px; top: 505px; width: 534px; height: 347px;
  border: 1px solid #c7ced4; border-radius: 6px 6px 5px 5px;
  background: linear-gradient(180deg, #8a9098 0, #7f858d 29%, #3d4f60 30%, #3a4a5a 100%);
  display: flex; flex-direction: column; padding: 0 4px 5px 5px;
  font-family: "Liberation Sans", "Noto Sans CJK SC", sans-serif;
  color: #111; box-shadow: 0 0 0 1px #3c4956;
}
.dlg-title {
  height: 27px; flex: none; margin: 0 -4px 0 -5px; display: flex; padding-left: 6px; align-items: flex-start;
  border-radius: 5px 5px 0 0;
  background: linear-gradient(90deg, #787878 0, #2b2b2b 8%, #0d0f11 22%, #10151a 45%, #2d3742 62%, #475461 78%, #7d8993 100%);
}
.dlg-title span { margin-top: 7px; color: #1b1b1b; font-size: 12px; text-shadow: 0 0 6px #e8e8e8, 0 0 6px #e8e8e8, 0 0 3px #e8e8e8; }
.dlg-close {
  margin-left: auto; margin-right: 3px; width: 47px; height: 19px; border: 1px solid #6a3a36; border-top: 0; border-radius: 0 0 4px 4px;
  background: linear-gradient(#d87f70, #c23c25 50%, #a82a15);
  color: #fff; font: bold 13px/19px "Liberation Sans", sans-serif; text-align: center;
}
.dlg-body { flex: 1; background: #ececec; display: flex; flex-direction: column; border: 1px solid #4f5a63; border-radius: 1px; }
.dlg-main { display: flex; height: 264px; flex: none; }
.dlg-left { width: 421px; padding: 10px 0 0 9px; }
.preset { display: flex; align-items: center; height: 21px; }
.plabel { width: 54px; white-space: nowrap; }
.wsel { width: 317px; height: 21px; background: #fff; border-radius: 2px; display: flex; align-items: center; padding-left: 5px; position: relative; }
.tri { width: 0; height: 0; border: 4px solid transparent; border-top: 5px solid #111; border-bottom: 0; margin-left: auto; margin-right: 4px; }
.dlist { width: 12px; height: 12px; margin-left: 10px; }
.group { position: relative; width: 391px; height: 168px; margin: 27px 0 0 2px; border: 1px solid #bdbdbd; box-shadow: inset 0 0 0 1px #e2e2e2; }
.legend { position: absolute; left: 18px; top: -8px; width: 98px; height: 22px; background: #fff; border-radius: 2px; display: flex; align-items: center; padding-left: 6px; box-shadow: 0 0 0 1px #ececec; }
.legend .tri { margin-right: 6px; }
.hs { width: 196px; margin-left: 98px; padding-top: 22px; }
.hs-row { display: flex; justify-content: space-between; align-items: center; height: 20px; margin: 0 9px 0 7px; white-space: nowrap; letter-spacing: .2px; }
.hs-row:not(:first-child) { margin-top: 12px; }
.num { width: 41px; height: 20px; background: #fff; border: 1px solid #b4d0e8; padding-left: 6px; display: flex; align-items: center; font-size: 12px; flex: none; }
.num em { font-style: normal; background: #3399ff; color: #fff; padding: 1px 1px; margin-left: -1px; }
.track { position: relative; height: 6px; margin-top: 10px; border-radius: 3px; box-shadow: 0 0 0 1px #ccc inset; }
.track i { position: absolute; top: 5px; width: 11px; height: 8px; background: #c8c8c8; border: 1px solid #999; clip-path: polygon(50% 0, 100% 45%, 100% 100%, 0 100%, 0 45%); }
.t-hue { background: linear-gradient(90deg, #f02040, #ff8000 8%, #ff0 17%, #0f0 33%, #0ff 50%, #00f 67%, #f0f 84%, #f02040); }
.t-sat { background: linear-gradient(90deg, #7f7f7f, #b04040 50%, #f00 85%); }
.t-lum { background: linear-gradient(90deg, #000, #fff); border: 1px solid #bbb; }
.pickers { display: flex; align-items: center; width: 392px; height: 22px; margin: 11px 0 0 2px; padding-left: 3px; }
.dhand { width: 20px; height: 20px; }
.drops { margin-left: auto; display: flex; gap: 11px; padding-right: 2px; }
.drops svg { width: 16px; height: 16px; }
.dlg-right { width: 90px; padding-top: 11px; }
.wbtn { height: 18px; margin-bottom: 10px; text-align: center; line-height: 17px; border: 1px solid #8a8a8a; border-radius: 3px; background: linear-gradient(#f2f2f2 45%, #cfcfcf 50%, #dcdcdc); box-shadow: inset 0 0 0 1px #fafafa; font-size: 13px; }
.wbtn.primary { border-color: #3c86b8; background: linear-gradient(#e6f2f9 45%, #b9d4e4 50%, #cfe3ef); box-shadow: inset 0 0 0 2px #67c8ee; }
.wcheck { display: flex; align-items: center; gap: 3px; height: 13px; margin-left: -1px; margin-bottom: 7px; white-space: nowrap; }
.wcheck.first { margin-top: 170px; }
.wcheck i { width: 13px; height: 13px; border: 1px solid #8a8a8a; background: linear-gradient(135deg, #ddd, #fff); flex: none; font-size: 11px; line-height: 11px; color: #4a6aa0; text-align: center; }
.spectra { margin: 10px 11px 0 11px; height: 25px; background: #d9d9d9; display: flex; flex-direction: column; justify-content: space-between; }
.spectra i { height: 9px; }
.sp1 { background: linear-gradient(90deg, #0ff, #00f 22%, #f0f 43%, #f00 54%, #ff0 68%, #0f0 84%, #0fc 100%); }
.sp2 { background: linear-gradient(90deg, #0aa8c0, #1020c0 22%, #b010b0 43%, #c81420 54%, #c8c014 68%, #14c020 84%, #14b8b8 100%); }

/* annotations */
.arrows { position: absolute; left: 0; top: 0; width: 1000px; height: 876px; pointer-events: none; }
.arrows polygon { fill: #f93b3b; }
.watermark { position: absolute; left: 768px; top: 772px; width: 180px; height: 80px; color: rgba(255,255,255,.78); font-family: "Liberation Sans", "Noto Sans CJK SC", sans-serif; }
.wpaw { position: absolute; left: 71px; top: 0; width: 44px; height: 30px; fill: rgba(255,255,255,.7); }
.wm1 { display: flex; align-items: baseline; margin-top: 22px; font-size: 40px; font-weight: bold; line-height: 30px; white-space: nowrap; letter-spacing: 1px; }
.wdu { font-size: 30px; margin-left: 2px; }
.wcn { font-size: 29px; margin-left: 6px; font-weight: normal; }
.wm2 { margin-top: 6px; font-size: 21px; line-height: 21px; white-space: nowrap; }
```
